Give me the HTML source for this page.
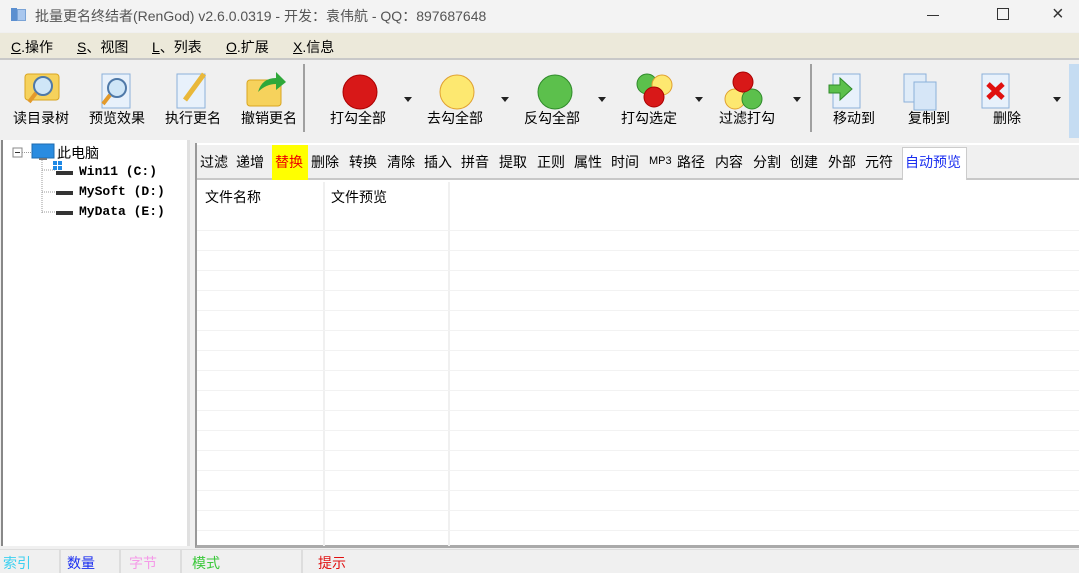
<!DOCTYPE html><html><head><meta charset="utf-8"><style>
*{margin:0;padding:0;box-sizing:border-box}
body{width:1079px;height:572px;overflow:hidden;background:#f0f0f0;font-family:"Liberation Sans","Noto Sans CJK SC",sans-serif;font-size:14px;color:#000;position:relative}
.abs{position:absolute}
.title{left:0;top:0;width:1079px;height:32px;background:#f3f3f3;color:#555;font-size:14px}
.menu{left:0;top:33px;width:1079px;height:27px;background:#ece9da;border-bottom:2px solid #c8c8c8}
.menu span{position:absolute;top:4px;font-size:14px}
.tb{left:0;top:62px;width:1079px;height:78px;background:#f0f0f0}
.btn{position:absolute;top:46px;font-size:14px;white-space:nowrap}
.arr{position:absolute;top:96px;width:0;height:0;border-left:4px solid transparent;border-right:4px solid transparent;border-top:5px solid #222}
.sep{position:absolute;top:64px;width:2px;height:68px;background:#a0a0a0}
.tree{left:1px;top:140px;width:189px;height:406px;background:#fff;border-left:2px solid #888;border-right:3px solid #e0e0e0}
.tree div{position:absolute;font-family:"Liberation Mono","Noto Sans CJK SC",monospace;font-size:13px;font-weight:bold}
.right{left:195px;top:143px;width:884px;height:405px;background:#fff;border-left:2px solid #999;border-bottom:3px solid #aaa}
.tabs{left:197px;top:145px;width:882px;height:35px;background:#f0f0f0;border-bottom:2px solid #c8c8c8}
.tabs span{position:absolute;top:7px;font-size:14px}
.status{left:0;top:549px;width:1079px;height:23px;background:#f0f0f0;border-top:1px solid #ddd}
.status span{position:absolute;top:3px;font-size:14px}
.status i{position:absolute;top:0;width:2px;height:23px;background:#ddd}
.hl{position:absolute;height:1px;background:#f2f2f2;left:197px;width:882px}
</style></head><body>
<div class="abs title">
<div class="abs" style="left:11px;top:8px;width:6px;height:13px;background:#5b8fd0"></div>
<div class="abs" style="left:17px;top:9px;width:9px;height:12px;background:#a9c7ee;border:1px solid #7aa3d6"></div>
<div class="abs" style="left:35px;top:6px">批量更名终结者(RenGod) v2.6.0.0319 - 开发：袁伟航 - QQ：897687648</div>
<div class="abs" style="left:927px;top:15px;width:12px;height:1px;background:#333"></div>
<div class="abs" style="left:997px;top:8px;width:12px;height:12px;border:1px solid #333"></div>
<div class="abs" style="left:1052px;top:3px;font-size:20px;color:#333">×</div>
</div>
<div class="abs menu">
<span style="left:11px"><u>C</u>.操作</span>
<span style="left:77px"><u>S</u>、视图</span>
<span style="left:152px"><u>L</u>、列表</span>
<span style="left:226px"><u>O</u>.扩展</span>
<span style="left:293px"><u>X</u>.信息</span>
</div>
<div class="abs tb" style="top:62px">
<svg class="abs" style="left:0;top:0" width="1079" height="78">
<rect x="25" y="12" width="34" height="26" rx="3" fill="#f6d25c" stroke="#d9a520"/>
<circle cx="43" cy="24" r="9" fill="#cfe6f7" stroke="#4f79a8" stroke-width="2"/><line x1="36" y1="31" x2="29" y2="40" stroke="#e39a2b" stroke-width="4"/>
<rect x="102" y="12" width="28" height="34" fill="#e8f1fb" stroke="#8bb1da"/>
<circle cx="117" cy="26" r="9" fill="#cfe6f7" stroke="#4f79a8" stroke-width="2"/><line x1="110" y1="33" x2="103" y2="42" stroke="#e39a2b" stroke-width="4"/>
<rect x="177" y="12" width="28" height="34" fill="#e8f1fb" stroke="#8bb1da"/>
<line x1="185" y1="38" x2="204" y2="12" stroke="#e9b83a" stroke-width="5"/>
<rect x="247" y="18" width="34" height="26" rx="3" fill="#f6d25c" stroke="#d9a520"/>
<path d="M258 30 Q262 16 276 16 L276 10 L286 20 L276 28 L276 22 Q266 22 258 30Z" fill="#2fa83a"/>
<circle cx="360" cy="30" r="17" fill="#d81818" stroke="#a00"/>
<circle cx="457" cy="30" r="17" fill="#fde870" stroke="#e0a030"/>
<circle cx="555" cy="30" r="17" fill="#5cc04c" stroke="#2f8a2a"/>
<circle cx="647" cy="22" r="10" fill="#5cc04c" stroke="#2f8a2a"/><circle cx="662" cy="23" r="10" fill="#fde870" stroke="#e0a030"/><circle cx="654" cy="35" r="10" fill="#d81818" stroke="#a00"/>
<circle cx="735" cy="37" r="10" fill="#fde870" stroke="#e0a030"/><circle cx="752" cy="37" r="10" fill="#5cc04c" stroke="#2f8a2a"/><circle cx="743" cy="20" r="10" fill="#d81818" stroke="#a00"/>
<rect x="833" y="12" width="27" height="34" fill="#e8f1fb" stroke="#8bb1da"/>
<path d="M829 23 L840 23 L840 16 L852 27 L840 38 L840 31 L829 31Z" fill="#5cc04c" stroke="#2f8a2a"/>
<rect x="904" y="12" width="22" height="28" fill="#e0ecf8" stroke="#8bb1da"/><rect x="914" y="20" width="22" height="28" fill="#d6e6f7" stroke="#8bb1da"/>
<rect x="982" y="12" width="27" height="34" fill="#e8f1fb" stroke="#8bb1da"/>
<path d="M988 22 L1003 36 M1003 22 L988 36" stroke="#e01010" stroke-width="5"/>
<rect x="1069" y="2" width="12" height="74" fill="#c5dcf2"/>
</svg>
<span class="btn" style="left:13px">读目录树</span>
<span class="btn" style="left:89px">预览效果</span>
<span class="btn" style="left:165px">执行更名</span>
<span class="btn" style="left:241px">撤销更名</span>
<div class="sep" style="left:303px;top:2px"></div>
<span class="btn" style="left:330px">打勾全部</span><div class="arr" style="left:404px;top:35px"></div>
<span class="btn" style="left:427px">去勾全部</span><div class="arr" style="left:501px;top:35px"></div>
<span class="btn" style="left:524px">反勾全部</span><div class="arr" style="left:598px;top:35px"></div>
<span class="btn" style="left:621px">打勾选定</span><div class="arr" style="left:695px;top:35px"></div>
<span class="btn" style="left:719px">过滤打勾</span><div class="arr" style="left:793px;top:35px"></div>
<div class="sep" style="left:810px;top:2px"></div>
<span class="btn" style="left:833px">移动到</span>
<span class="btn" style="left:908px">复制到</span>
<span class="btn" style="left:993px">删除</span><div class="arr" style="left:1053px;top:35px"></div>
</div>
<div class="abs tree">
<svg class="abs" style="left:0;top:0" width="190" height="90">
<rect x="10" y="8" width="9" height="9" fill="#fff" stroke="#888"/><line x1="12" y1="12.5" x2="17" y2="12.5" stroke="#333"/>
<path d="M19 12.5 H29 M39 20 V73 M39 30 H52 M39 52 H52 M39 72 H52" stroke="#999" stroke-dasharray="1,1"/>
<rect x="29" y="4" width="22" height="14" fill="#2a8ce0" stroke="#1d6bb0"/><rect x="36" y="18" width="8" height="2" fill="#777"/>
<rect x="50" y="21" width="4" height="4" fill="#1e88e5"/><rect x="55" y="21" width="4" height="4" fill="#1e88e5"/><rect x="50" y="26" width="4" height="4" fill="#1e88e5"/><rect x="55" y="26" width="4" height="4" fill="#1e88e5"/>
<rect x="53" y="31" width="17" height="4" fill="#333"/><rect x="53" y="51" width="17" height="4" fill="#333"/><rect x="53" y="71" width="17" height="4" fill="#333"/>
</svg>
<div style="left:54px;top:3px;font-family:'Liberation Sans','Noto Sans CJK SC',sans-serif;font-size:14px;font-weight:normal">此电脑</div>
<div style="left:76px;top:24px">Win11 (C:)</div>
<div style="left:76px;top:44px">MySoft (D:)</div>
<div style="left:76px;top:64px">MyData (E:)</div>
</div>
<div class="abs right"></div>
<div class="abs tabs">
<div class="abs" style="left:75px;top:0;width:36px;height:35px;background:#ffff00"></div>
<div class="abs" style="left:705px;top:2px;width:65px;height:33px;background:#fff;border:1px solid #ccc;border-bottom:none"></div>
<span style="left:3px">过滤</span><span style="left:39px">递增</span><span style="left:78px;color:#e00">替换</span><span style="left:114px">删除</span><span style="left:152px">转换</span><span style="left:190px">清除</span><span style="left:227px">插入</span><span style="left:264px">拼音</span><span style="left:302px">提取</span><span style="left:340px">正则</span><span style="left:377px">属性</span><span style="left:414px">时间</span><span style="left:452px;font-size:11px;top:10px">MP3</span><span style="left:480px">路径</span><span style="left:518px">内容</span><span style="left:556px">分割</span><span style="left:593px">创建</span><span style="left:631px">外部</span><span style="left:668px">元符</span><span style="left:708px;color:#1a2ef0">自动预览</span>
</div>
<div class="abs" style="left:205px;top:187px">文件名称</div>
<div class="abs" style="left:331px;top:187px">文件预览</div>
<div class="abs" style="left:323px;top:182px;width:2px;height:364px;background:#f0f0f0"></div>
<div class="abs" style="left:448px;top:182px;width:2px;height:364px;background:#f0f0f0"></div>
<div class="hl" style="top:230px"></div><div class="hl" style="top:250px"></div><div class="hl" style="top:270px"></div><div class="hl" style="top:290px"></div><div class="hl" style="top:310px"></div><div class="hl" style="top:330px"></div><div class="hl" style="top:350px"></div><div class="hl" style="top:370px"></div><div class="hl" style="top:390px"></div><div class="hl" style="top:410px"></div><div class="hl" style="top:430px"></div><div class="hl" style="top:450px"></div><div class="hl" style="top:470px"></div><div class="hl" style="top:490px"></div><div class="hl" style="top:510px"></div><div class="hl" style="top:530px"></div>
<div class="abs status">
<span style="left:3px;color:#3cd0f0">索引</span><i style="left:59px"></i>
<span style="left:67px;color:#1a2ef0">数量</span><i style="left:119px"></i>
<span style="left:129px;color:#f59ae8">字节</span><i style="left:180px"></i>
<span style="left:192px;color:#3ac83a">模式</span><i style="left:301px"></i>
<span style="left:318px;color:#e01010">提示</span>
</div>
</body></html>
